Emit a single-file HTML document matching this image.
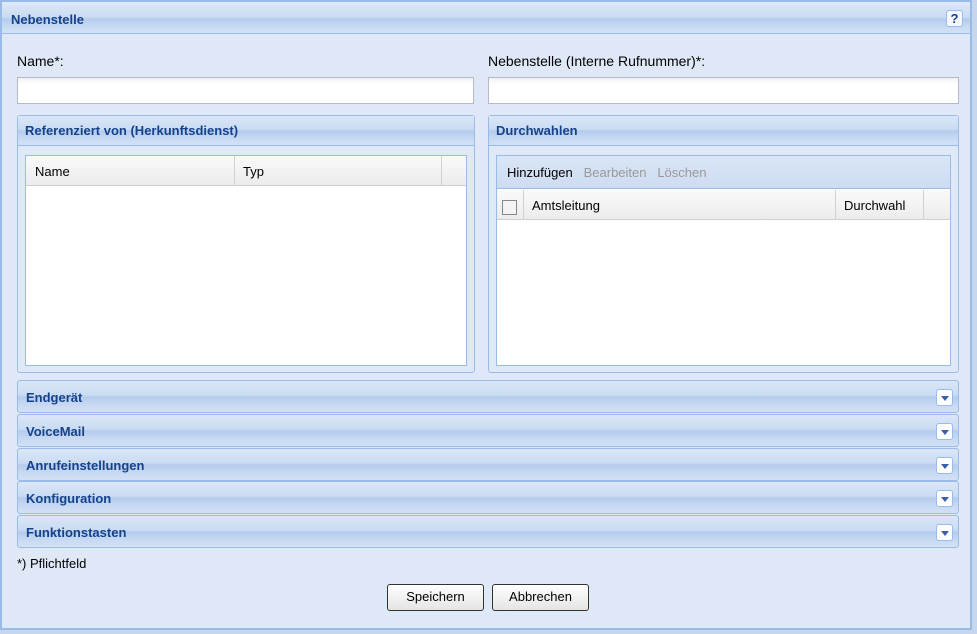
<!DOCTYPE html>
<html><head><style>
body{margin:0;width:977px;height:634px;background:#c6d6ec;font-family:"Liberation Sans",sans-serif;font-size:13px;position:relative;overflow:hidden}
.a{position:absolute;box-sizing:border-box}
.win{left:0;top:0;width:972px;height:630px;background:#dfe8f6;border:2px solid #99bbe8}
.hd{background:linear-gradient(#dbe6f6,#cadcf3 45%,#b4cbec 52%,#c3d6f1 70%,#d3e1f5);color:#15428b;font-weight:bold;font-size:13px;border-bottom:1px solid #99bbe8}
.lbl{font-size:14px;color:#000}
.inp{background:linear-gradient(#f0f0f0,#fff 6px);border:1px solid #b5b8c8}
.pan{border:1px solid #99bbe8;background:#dfe8f6;border-radius:3px}
.pan.hd{background:linear-gradient(#dbe6f6,#cadcf3 45%,#b4cbec 52%,#c3d6f1 70%,#d3e1f5)}
.grid{background:#fff;border:1px solid #99bbe8}
.gh{background:linear-gradient(#fafafa,#ececec);border-bottom:1px solid #d0d0d0;font-size:13px}
.col{position:absolute;top:0;bottom:0;border-right:1px solid #d0d0d0}
.tool{position:absolute;right:5px;top:8px;width:17px;height:17px;border:1px solid #99bbe8;border-radius:3px;background:#fff;box-sizing:border-box}
.tool:after{content:"";position:absolute;left:4px;top:6px;border:4px solid transparent;border-top:5px solid #3a5fa8;border-bottom:0}
.btn{background:linear-gradient(#fff,#e4e4e4);border:1px solid #333;border-radius:3px;text-align:center;font-size:13px;line-height:24px}
</style></head><body>
<div class="a win"></div>
<div class="a hd" style="left:2px;top:4px;width:968px;height:30px;padding:8px 0 0 9px">Nebenstelle</div>
<div class="a" style="left:946px;top:10px;width:17px;height:17px;border:1px solid #99bbe8;border-radius:3px;background:#f4f8fe;color:#15428b;font-weight:bold;font-size:13px;text-align:center;line-height:16px">?</div>
<div class="a lbl" style="left:17px;top:53px">Name*:</div>
<div class="a lbl" style="left:488px;top:53px">Nebenstelle (Interne Rufnummer)*:</div>
<div class="a inp" style="left:17px;top:77px;width:457px;height:27px"></div>
<div class="a inp" style="left:488px;top:77px;width:471px;height:27px"></div>

<div class="a pan" style="left:17px;top:115px;width:458px;height:258px"></div>
<div class="a hd" style="left:18px;top:116px;width:456px;height:30px;padding:7px 0 0 7px">Referenziert von (Herkunftsdienst)</div>
<div class="a grid" style="left:25px;top:155px;width:442px;height:211px"></div>
<div class="a gh" style="left:26px;top:156px;width:440px;height:30px">
<div class="col" style="left:0;width:209px;padding:8px 0 0 9px;box-sizing:border-box">Name</div>
<div class="col" style="left:209px;width:207px;padding:8px 0 0 8px;box-sizing:border-box">Typ</div></div>

<div class="a pan" style="left:488px;top:115px;width:471px;height:258px"></div>
<div class="a hd" style="left:489px;top:116px;width:469px;height:30px;padding:7px 0 0 7px">Durchwahlen</div>
<div class="a grid" style="left:496px;top:155px;width:455px;height:211px"></div>
<div class="a" style="left:497px;top:156px;width:453px;height:33px;background:linear-gradient(#dae6f6,#cddcf2);border-bottom:1px solid #99bbe8;padding:9px 0 0 10px;font-size:13px">Hinzufügen &nbsp;&nbsp;<span style="color:#999">Bearbeiten &nbsp;&nbsp;Löschen</span></div>
<div class="a gh" style="left:497px;top:190px;width:453px;height:30px">
<div class="col" style="left:0;width:26px"><div class="a" style="left:5px;top:10px;width:15px;height:15px;border:1px solid #888;background:#f4f4f4"></div></div>
<div class="col" style="left:26px;width:313px;padding:8px 0 0 9px;box-sizing:border-box">Amtsleitung</div>
<div class="col" style="left:339px;width:88px;padding:8px 0 0 8px;box-sizing:border-box">Durchwahl</div></div>

<div class="a pan hd" style="left:17px;top:380px;width:942px;height:33px;padding:9px 0 0 8px">Endgerät<div class="tool"></div></div>
<div class="a pan hd" style="left:17px;top:414px;width:942px;height:33px;padding:9px 0 0 8px">VoiceMail<div class="tool"></div></div>
<div class="a pan hd" style="left:17px;top:448px;width:942px;height:33px;padding:9px 0 0 8px">Anrufeinstellungen<div class="tool"></div></div>
<div class="a pan hd" style="left:17px;top:481px;width:942px;height:33px;padding:9px 0 0 8px">Konfiguration<div class="tool"></div></div>
<div class="a pan hd" style="left:17px;top:515px;width:942px;height:33px;padding:9px 0 0 8px">Funktionstasten<div class="tool"></div></div>
<div class="a" style="left:17px;top:556px;font-size:13px">*) Pflichtfeld</div>
<div class="a btn" style="left:387px;top:584px;width:97px;height:27px">Speichern</div>
<div class="a btn" style="left:492px;top:584px;width:97px;height:27px">Abbrechen</div>
</body></html>
